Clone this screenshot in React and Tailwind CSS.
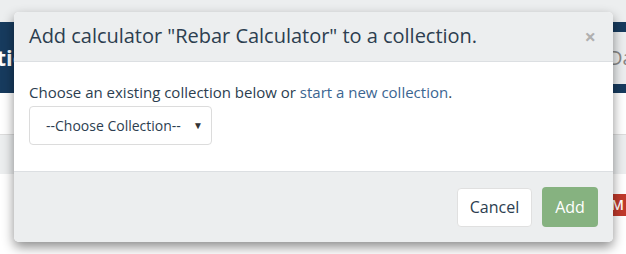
export default function App() {
  const font = { fontFamily: '"Open Sans", "Noto Sans", sans-serif' };
  return (
    <div className="relative w-[626px] h-[254px] overflow-hidden bg-white" style={font}>
      {/* background page */}
      <div className="h-[22px] bg-[#eceeef]" />
      <div className="h-[71px] bg-[#173b5e] flex items-center justify-between">
        <span className="text-white font-bold text-[22px] ml-[-69px] whitespace-nowrap">Collectio</span>
        <div className="h-[52px] w-[200px] bg-[#eceeef] flex items-center mr-[-170px]">
          <span className="text-[20px] text-[#888] pl-[12px]">Data</span>
        </div>
      </div>
      <div className="h-[41px] bg-white" />
      <div className="h-[40px] bg-[#eceeef] border-t border-[#dcdcdc]" />
      <div className="flex justify-end pt-[20px]">
        <span className="bg-[#c0392b] text-white text-[14px] font-semibold pl-[3px] pr-[2px] leading-[22px]">M</span>
      </div>

      {/* overlay modal */}
      <div className="absolute left-[14px] top-[12px] w-[599px] h-[230px] rounded-[5px] bg-white shadow-[0_5px_12px_rgba(0,0,0,0.45)] flex flex-col overflow-hidden">
        <div className="h-[50px] bg-[#eceeef] border-b border-[#dcdfe2] flex items-center justify-between pl-[15px] pr-[15px]">
          <h4 className="text-[20px] text-[#2c3e50] leading-none tracking-[-0.02px] mt-[-1px]">Add calculator "Rebar Calculator" to a collection.</h4>
          <span className="text-[#b0b0b0] text-[20px] font-bold leading-none mr-[2px]">×</span>
        </div>
        <div className="flex-1 bg-white pl-[15px] pt-[20px]">
          <p className="text-[15px] text-[#2c3e50] leading-[21px]">
            Choose an existing collection below or <span className="text-[#3b6591]">start a new collection</span>.
          </p>
          <div className="mt-[3px] w-[183px] h-[39px] border border-[#dcdcdc] rounded-[4px] flex items-center justify-between pl-[16px] pr-[8px]">
            <span className="text-[14px] text-[#2c3e50]">--Choose Collection--</span>
            <span className="text-[10px] text-[#333]">▼</span>
          </div>
        </div>
        <div className="h-[71px] bg-[#eceeef] border-t border-[#dcdfe2] flex items-center justify-end gap-[10px] pr-[15px]">
          <div className="w-[75px] h-[39px] bg-white border border-[#e0e0e0] rounded-[4px] flex items-center justify-center text-[16px] text-[#2c3e50]">Cancel</div>
          <div className="w-[56px] h-[40px] bg-[#86b280] rounded-[4px] flex items-center justify-center text-[16px] text-white">Add</div>
        </div>
      </div>
    </div>
  );
}
